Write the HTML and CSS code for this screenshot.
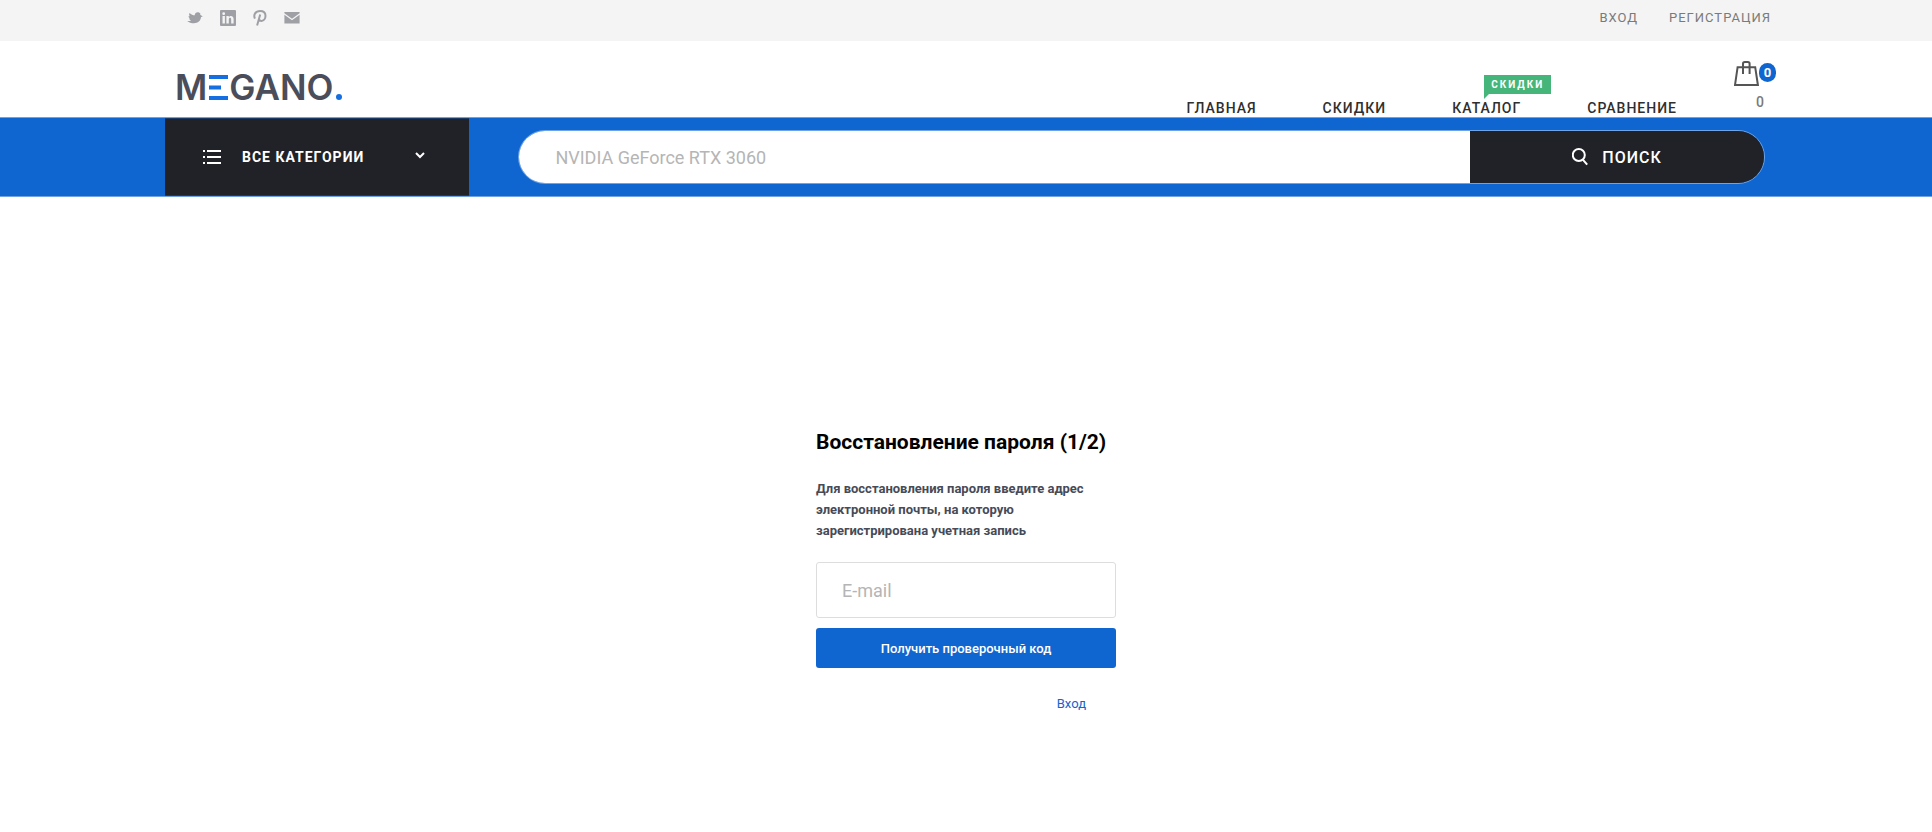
FILE: index.html
```html
<!DOCTYPE html>
<html lang="ru">
<head>
<meta charset="utf-8">
<meta name="viewport" content="width=device-width, initial-scale=1">
<title>Восстановление пароля — Megano</title>
<link rel="stylesheet" href="styles.css">
</head>
<body>
<header>
  <div class="topbar">
    <div class="wrap topbar-inner">
      <nav class="social" aria-label="Социальные сети">
        <a href="#" aria-label="Twitter"><svg width="16" height="16" viewBox="0 0 17 16"><path d="M.3 11.2c1.700.3 3.100-.1 4-.9-1.200-.3-2-.9-2.200-1.800h1.300C2.200 7.900 1.600 7 1.700 5.900l1.400.3C2.100 5.200 2 3.700 2.800 2.600 4.400 4.400 6.300 5 8.200 5.100 8.300 3.200 9.600 1.900 11.400 1.900c1.300 0 2.200.6 2.800 1.600L14 4.600l2.800 1.700-1.900.7c-.3 4.100-3.300 6.600-7.500 6.600-2.800 0-5.300-.7-7.100-2.400z"/></svg></a>
        <a href="#" aria-label="LinkedIn"><svg width="16" height="16" viewBox="0 0 16 16"><path fill-rule="evenodd" d="M1 0h14a1 1 0 0 1 1 1v14a1 1 0 0 1-1 1H1a1 1 0 0 1-1-1V1a1 1 0 0 1 1-1zm1.500 6v7.600h2.400V6zM3.700 2.300a1.400 1.400 0 1 0 0 2.800 1.400 1.400 0 0 0 0-2.800zM6.400 6v7.600h2.400V9.500c0-2.200 2.400-2.200 2.400 0v4.100h2.400V9c0-3.500-3.500-3.900-4.800-1.900V6z"/></svg></a>
        <a href="#" aria-label="Pinterest"><svg width="14" height="16" viewBox="0 0 14 16"><path class="pin" d="M1.900 8.600C.2 4.900 2.400 1 7.100 1c3.400 0 5.400 2 5.400 4.800 0 3-1.800 5.100-3.900 5.100-1.300 0-2.300-.7-2.500-1.700M7.200 4.600 4.100 15.600"/></svg></a>
        <a href="#" aria-label="E-mail"><svg width="16" height="12" viewBox="0 0 16 12"><path d="M.4 0h15.200v1.200L8 6.800.4 1.200zM.4 2.700 8 8.300l7.600-5.600v8.800H.4z"/></svg></a>
      </nav>
      <nav class="account" aria-label="Аккаунт">
        <a href="#">ВХОД</a>
        <a href="#">РЕГИСТРАЦИЯ</a>
      </nav>
    </div>
  </div>
  <div class="wrap head">
    <a class="logo" href="#" aria-label="MEGANO.">
      <span>M</span>
      <svg class="logo-bars" width="19" height="25" viewBox="0 0 19 25" aria-hidden="true"><path d="M0 0h19v4H0zM0 10.500h12v4H0zM0 21h19v4H0z"/></svg>
      <span>GANO</span>
      <span class="logo-dot"></span>
    </a>
    <nav class="menu" aria-label="Главное меню">
      <a href="#">ГЛАВНАЯ</a>
      <a href="#">СКИДКИ</a>
      <a href="#">КАТАЛОГ<span class="tag">СКИДКИ</span></a>
      <a href="#">СРАВНЕНИЕ</a>
    </nav>
    <a class="cart" href="#" aria-label="Корзина">
      <span class="cart-row">
        <svg width="25" height="25" viewBox="0 0 25 25" aria-hidden="true"><path d="M3.600 6.200h17.600l2.700 17.800H1zM9 13V2.800Q9 1 10.800 1h3Q15.600 1 15.600 2.800V13"/></svg>
        <span class="badge">0</span>
      </span>
      <span class="cart-sum">0</span>
    </a>
  </div>
  <div class="band">
    <div class="wrap band-inner">
      <button class="categories" type="button">
        <svg class="list" width="18" height="14" viewBox="0 0 18 14" aria-hidden="true"><path d="M0 1h2M4 1h14M0 7h2M4 7h14M0 13h2M4 13h14"/></svg>
        <span>ВСЕ КАТЕГОРИИ</span>
        <svg class="chevron" width="10" height="7" viewBox="0 0 10 7" aria-hidden="true"><path d="m1 1 4 4 4-4"/></svg>
      </button>
      <form class="search" role="search">
        <input type="text" aria-label="Поиск товаров" placeholder="NVIDIA GeForce RTX 3060">
        <button type="button">
          <svg width="16" height="18" viewBox="0 0 16 18" aria-hidden="true"><circle cx="6.800" cy="7" r="6"/><path d="m10.800 11.600 4.400 5"/></svg>
          <span>ПОИСК</span>
        </button>
      </form>
    </div>
  </div>
</header>
<main>
  <form class="recover">
    <h1>Восстановление пароля (1/2)</h1>
    <p>Для восстановления пароля введите адрес электронной почты, на которую зарегистрирована учетная запись</p>
    <input type="email" aria-label="E-mail" placeholder="E-mail">
    <button type="button">Получить проверочный код</button>
    <a href="#">Вход</a>
  </form>
</main>
</body>
</html>
```

FILE: styles.css
```css
* { box-sizing: border-box; }

body {
  margin: 0;
  background: #fff;
  color: #212227;
  font-family: Roboto, "Liberation Sans", sans-serif;
  font-size: 14px;
}

a { color: inherit; text-decoration: none; }
button, input { font-family: inherit; border: 0; margin: 0; }
button { cursor: pointer; }
svg { display: block; flex: none; }

.wrap { max-width: 1632px; margin: 0 auto; }

.topbar { background: #f4f4f4; }
.topbar-inner {
  display: flex;
  justify-content: space-between;
  padding: 10px 11px 15px 37px;
}
.social, .account { display: flex; align-items: center; }
.social { gap: 17px; }
.social svg { fill: #9fa0a6; }
.social .pin { fill: none; stroke: #9fa0a6; stroke-width: 2; }
.account {
  gap: 31px;
  color: #7a7a7a;
  font-size: 13px;
  line-height: 16px;
  letter-spacing: 1px;
}

.head {
  display: flex;
  padding: 18px 6px 0 25px;
}
.logo {
  display: flex;
  align-items: center;
  align-self: flex-start;
  margin-top: 16px;
  color: #4b4e5a;
  font-family: Inter, sans-serif;
  font-size: 35px;
  font-weight: 600;
  line-height: 25px;
}
.logo-bars { margin: 0 1px 0 2px; fill: #156fe0; }
.logo-dot {
  align-self: flex-end;
  width: 6px;
  height: 6px;
  margin-left: 3px;
  border-radius: 50%;
  background: #156fe0;
}
.menu {
  display: flex;
  align-items: flex-end;
  gap: 66px;
  margin-left: auto;
  color: #2f2f2f;
  font-size: 14px;
  font-weight: 500;
  line-height: 18px;
  letter-spacing: 1px;
}
.menu a { position: relative; }
.tag {
  position: absolute;
  left: 32px;
  bottom: 23px;
  padding: 0 7px;
  background: #45b57a;
  color: #fff;
  font-size: 10px;
  font-weight: 700;
  line-height: 19px;
  letter-spacing: 2px;
}
.tag::after {
  content: "";
  position: absolute;
  left: 0;
  top: 100%;
  border-top: 5px solid #45b57a;
  border-right: 5px solid transparent;
}
.cart { margin-left: 57px; padding: 2px 0 6px; }
.cart-row { display: flex; }
.cart svg { fill: none; stroke: #555; stroke-width: 2; }
.badge {
  width: 17px;
  height: 19px;
  margin-top: 2px;
  border-radius: 10px;
  background: #1066d1;
  color: #fff;
  font-size: 13px;
  font-weight: 700;
  line-height: 19px;
  text-align: center;
}
.cart-sum {
  display: block;
  margin-top: 7px;
  padding-right: 12px;
  color: #7a7a7a;
  font-size: 14px;
  font-weight: 500;
  line-height: 18px;
  text-align: right;
}

.band {
  border: solid #6ea2e3;
  border-width: 1px 0;
  background: #1066d1;
}
.band-inner {
  display: grid;
  grid-template-columns: 19fr 81fr;
  padding: 0 15px;
}
.categories {
  display: flex;
  align-items: center;
  padding: 0 44px 0 38px;
  border: solid #1a3a68;
  border-width: 1px 0;
  background: #212227;
  color: #fff;
  font-size: 14px;
  font-weight: 700;
  letter-spacing: 1px;
}
.categories span { margin-left: 21px; }
.categories svg { fill: none; stroke: #fff; stroke-width: 2; }
.categories .chevron { margin-left: auto; margin-bottom: 4px; }

.search {
  display: flex;
  height: 54px;
  margin: 12px 2px 12px 49px;
  border: 1px solid #70a3e3;
  border-radius: 27px;
  overflow: hidden;
}
.search input {
  flex: 1;
  min-width: 0;
  padding: 0 36px;
  background: #fff;
  font-size: 18px;
}
::placeholder { color: #b5b5b5; opacity: 1; }
.search button {
  display: flex;
  flex: 0 0 294px;
  align-items: center;
  justify-content: center;
  gap: 14px;
  padding: 0;
  background: #212227;
  color: #fff;
  font-size: 16px;
  font-weight: 500;
  letter-spacing: 1px;
}
.search svg { fill: none; stroke: #fff; stroke-width: 2; }

main { padding: 228px 0 120px; }
.recover {
  display: flex;
  flex-direction: column;
  width: 300px;
  margin: 0 auto;
}
.recover h1 {
  margin: 0;
  color: #000;
  font-size: 21px;
  font-weight: 700;
  line-height: 34px;
  white-space: nowrap;
}
.recover p {
  margin: 19px 0 21px;
  color: #474a57;
  font-size: 13px;
  font-weight: 700;
  line-height: 21px;
}
.recover input {
  height: 56px;
  padding: 0 25px;
  border: 1px solid #ddd;
  border-radius: 3px;
  font-size: 18px;
}
.recover button {
  height: 40px;
  margin-top: 10px;
  border-radius: 3px;
  background: #1066d1;
  color: #fff;
  font-size: 13px;
  font-weight: 500;
}
.recover a {
  align-self: flex-end;
  margin: 26px 30px 0 0;
  color: #1066d1;
  font-size: 13px;
  line-height: 20px;
}
```
